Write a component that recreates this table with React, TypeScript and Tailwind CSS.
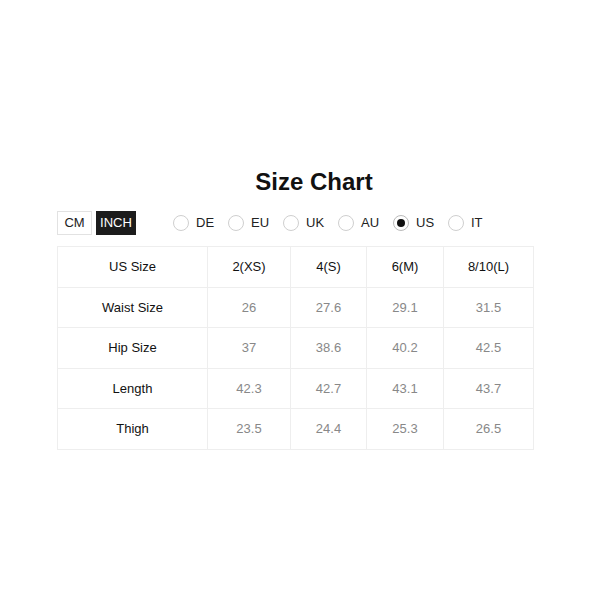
import React from "react";

const cols = ["2(XS)", "4(S)", "6(M)", "8/10(L)"];
const rows: [string, string[]][] = [
  ["Waist Size", ["26", "27.6", "29.1", "31.5"]],
  ["Hip Size", ["37", "38.6", "40.2", "42.5"]],
  ["Length", ["42.3", "42.7", "43.1", "43.7"]],
  ["Thigh", ["23.5", "24.4", "25.3", "26.5"]],
];
const widths = ["w-[150px]", "w-[83px]", "w-[76px]", "w-[77px]", "w-[90px]"];
const heights = ["h-[41px]", "h-[40px]", "h-[41px]", "h-[40px]", "h-[41px]"];
const regions = ["DE", "EU", "UK", "AU", "US", "IT"];

export default function App() {
  return (
    <div
      className="w-[600px] h-[600px] bg-white"
      style={{ fontFamily: '"Liberation Sans", Arial, sans-serif' }}
    >
      <div className="pt-[167px] pl-[57px]">
        <div className="w-[476px] pl-[38px] text-center text-[24px] leading-[30px] font-bold text-[#111]">
          Size Chart
        </div>
        <div className="mt-[14px] flex items-center h-[24px] text-[13px]">
          <div className="w-[35px] h-[24px] border border-[#e2e2e2] flex items-center justify-center text-[#222]">
            CM
          </div>
          <div className="ml-[4px] w-[40px] h-[24px] bg-[#1c1c1c] text-white flex items-center justify-center">
            INCH
          </div>
          <div className="ml-[37px] flex items-center">
            {regions.map((r) => (
              <div key={r} className="w-[55px] flex items-center">
                <div
                  className={
                    "w-[16px] h-[16px] rounded-full border flex items-center justify-center " +
                    (r === "US" ? "border-[#bbb]" : "border-[#cfcfcf]")
                  }
                >
                  {r === "US" && <div className="w-[8px] h-[8px] rounded-full bg-[#111]" />}
                </div>
                <span className="ml-[7px] text-[#222]">{r}</span>
              </div>
            ))}
          </div>
        </div>
        <table className="mt-[11px] border-collapse text-[13px] text-center">
          <tbody>
            <tr className={heights[0]}>
              <td className={"border border-[#eeeeee] text-[#111] " + widths[0]}>US Size</td>
              {cols.map((c, i) => (
                <td key={c} className={"border border-[#eeeeee] text-[#111] " + widths[i + 1]}>
                  {c}
                </td>
              ))}
            </tr>
            {rows.map(([label, vals], ri) => (
              <tr key={label} className={heights[ri + 1]}>
                <td className="border border-[#eeeeee] text-[#111]">{label}</td>
                {vals.map((v, i) => (
                  <td key={i} className="border border-[#eeeeee] text-[#888]">
                    {v}
                  </td>
                ))}
              </tr>
            ))}
          </tbody>
        </table>
      </div>
    </div>
  );
}
